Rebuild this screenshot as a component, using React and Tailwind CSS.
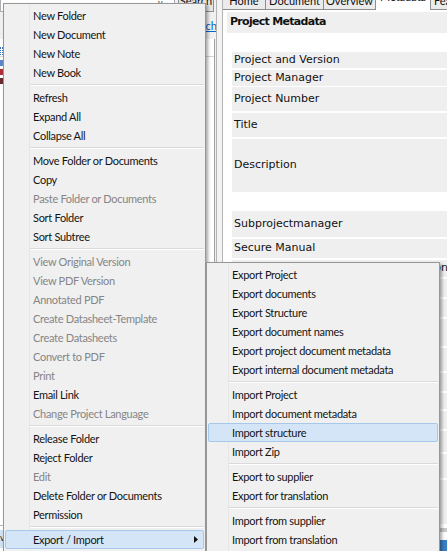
import React from "react";

const MAIN = [
  [{ t: "New Folder" }, { t: "New Document" }, { t: "New Note" }, { t: "New Book" }],
  [{ t: "Refresh" }, { t: "Expand All" }, { t: "Collapse All" }],
  [
    { t: "Move Folder or Documents" },
    { t: "Copy" },
    { t: "Paste Folder or Documents", off: true },
    { t: "Sort Folder" },
    { t: "Sort Subtree" },
  ],
  [
    { t: "View Original Version", off: true },
    { t: "View PDF Version", off: true },
    { t: "Annotated PDF", off: true },
    { t: "Create Datasheet-Template", off: true },
    { t: "Create Datasheets", off: true },
    { t: "Convert to PDF", off: true },
    { t: "Print", off: true },
    { t: "Email Link" },
    { t: "Change Project Language", off: true },
  ],
  [
    { t: "Release Folder" },
    { t: "Reject Folder" },
    { t: "Edit", off: true },
    { t: "Delete Folder or Documents" },
    { t: "Permission" },
  ],
  [{ t: "Export / Import", sub: true, hot: true }],
];

const SUB = [
  [
    { t: "Export Project" },
    { t: "Export documents" },
    { t: "Export Structure" },
    { t: "Export document names" },
    { t: "Export project document metadata" },
    { t: "Export internal document metadata" },
  ],
  [
    { t: "Import Project" },
    { t: "Import document metadata" },
    { t: "Import structure", hot: true },
    { t: "Import Zip" },
  ],
  [{ t: "Export to supplier" }, { t: "Export for translation" }],
  [{ t: "Import from supplier" }, { t: "Import from translation" }],
];

const TABS = [
  { t: "Home", w: "w-[43px]" },
  { t: "Document", w: "w-[58px]" },
  { t: "Overview", w: "w-[52px]" },
  { t: "Metadata", w: "w-[55px]", on: true },
  { t: "Features", w: "w-[40px]", last: true },
];

const ROWS = [
  { t: "Project and Version", h: "h-[16px]", mb: "mb-[2px]" },
  { t: "Project Manager", h: "h-[16px]", mb: "mb-[1px]" },
  { t: "Project Number", h: "h-[24px]", mb: "mb-[2px]" },
  { t: "Title", h: "h-[24px]", mb: "mb-[2px]" },
  { t: "Description", h: "h-[53px]", mb: "mb-[19px]" },
  { t: "Subprojectmanager", h: "h-[26px]", mb: "mb-[2px]" },
  { t: "Secure Manual", h: "h-[19px]", mb: "mb-[2px]" },
  { t: "Responsible for Project Documentation", h: "h-[17px]", mb: "mb-[2px]" },
  { t: "", h: "h-[18px]", mb: "mb-[2px]" },
  { t: "", h: "h-[18px]", mb: "mb-[2px]" },
  { t: "", h: "h-[27px]", mb: "mb-[2px]" },
  { t: "", h: "h-[23px]", mb: "mb-[2px]" },
  { t: "", h: "h-[18px]", mb: "mb-[2px]" },
  { t: "", h: "h-[16px]", mb: "mb-[2px]" },
  { t: "", h: "h-[18px]", mb: "mb-[2px]" },
  { t: "", h: "h-[21px]", mb: "mb-[2px]" },
  { t: "", h: "h-[24px]", mb: "mb-[2px]" },
  { t: "", h: "h-[44px]", mb: "mb-[2px]" },
];

function MenuItem({ item, pad }) {
  return (
    <div
      className={`relative mx-[1px] h-[19px] flex items-center border rounded-[2px] ${pad} ${
        item.hot ? "bg-[#d4e5f7] border-[#a6c8eb]" : "border-transparent"
      }`}
    >
      <span className={item.off ? "text-[#858585]" : "text-[#141414]"}>{item.t}</span>
      {item.sub && (
        <svg className="ml-auto mr-[5px]" width="4" height="7" viewBox="0 0 4 7">
          <path d="M0 0L4 3.5L0 7Z" fill="#111" />
        </svg>
      )}
    </div>
  );
}

function Menu({ groups, pos, gutter, sep, pad }) {
  return (
    <div
      className={`absolute ${pos} bg-[#f0f0f0] border border-[#979797] py-[2px] shadow-[2px_2px_3px_rgba(0,0,0,0.35)] font-['Lato',sans-serif] text-[11px] tracking-[-0.3px] leading-none`}
    >
      <div className={`absolute top-0 bottom-0 ${gutter} w-[2px] border-l border-[#e6e6e6] bg-transparent`} />
      {groups.map((g, gi) => (
        <React.Fragment key={gi}>
          {gi > 0 && (
            <div className={`h-[6px] flex flex-col justify-center ${sep} mr-[1px]`}>
              <div className="h-px bg-[#dadada]" />
              <div className="h-px bg-white" />
            </div>
          )}
          {g.map((item) => (
            <MenuItem key={item.t} item={item} pad={pad} />
          ))}
        </React.Fragment>
      ))}
    </div>
  );
}

export default function App() {
  return (
    <div className="relative w-[447px] h-[551px] overflow-hidden bg-white flex font-['DejaVu_Sans',sans-serif] text-[11px] text-[#111]">
      {/* left pane */}
      <div className="w-[216px] shrink-0 flex flex-col bg-[#f0f0f0]">
        <div className="h-[13px] flex items-start gap-[3px]">
          <div className="relative w-[175px] h-[12px] bg-white border border-t-0 border-[#abadb3]">
            <span className="absolute left-[157px] -top-[4px] font-['Lato',sans-serif] text-[9px] text-[#333]">v</span>
          </div>
          <div className="w-[36px] h-[12px] bg-[#e6e6e6] border border-t-0 border-[#8f8f8f] overflow-hidden flex justify-center">
            <span className="-mt-[5px] font-['Lato',sans-serif] text-[11px] leading-[12px]">Search</span>
          </div>
        </div>
        <div className="h-[26px] flex justify-end items-center -mr-[1px]">
          <span className="font-['Lato',sans-serif] text-[11px] text-[#0066cc] underline">Advanced Search</span>
        </div>
        <div className="flex-1 mr-[1px] bg-white border-r border-[#a0a0a0] flex flex-col">
          <div className="h-[18px] border-b border-[#d5d5d5] flex items-end">
            <span className="w-[3px] h-[8px] mb-[1px] border border-dotted border-[#3b6fb8]" />
          </div>
          <div className="flex flex-col gap-[3px] pt-[3px]">
            <span className="w-[3px] h-[6px] bg-[#5a86c8]" />
            <span className="w-[3px] h-[6px] bg-[#b0303a]" />
            <span className="w-[3px] h-[6px] bg-[#6b2b33]" />
          </div>
          <div className="mt-auto mb-[3px] border-t border-[#b8b8b8] pt-[4px]">
            <div className="h-[18px] bg-[#cfe2f5] flex items-center">
              <span className="text-[8px] text-[#222] leading-none">v</span>
            </div>
          </div>
        </div>
      </div>

      {/* splitter */}
      <div className="w-[7px] shrink-0 bg-[#f3f3f3] border-x border-[#b4b4b4]" />

      {/* right pane */}
      <div className="flex-1 min-w-0 flex flex-col bg-white">
        <div className="flex h-[10px] shrink-0 font-['Lato',sans-serif] text-[11px] leading-[12px]">
          {TABS.map((tab) =>
            tab.on ? (
              <div
                key={tab.t}
                className={`${tab.w} h-[10px] shrink-0 bg-white border-r border-[#8c8e94] overflow-hidden flex justify-center`}
              >
                <span className="-mt-[9px]">{tab.t}</span>
              </div>
            ) : (
              <div
                key={tab.t}
                className={`${tab.w} h-[10px] shrink-0 bg-[#ebebeb] border-r border-b border-[#8c8e94] overflow-hidden flex ${
                  tab.last ? "justify-start pl-[3px]" : "justify-center"
                }`}
              >
                <span className="-mt-[5px]">{tab.t}</span>
              </div>
            )
          )}
        </div>

        <div className="pl-[4px] pt-[2px]">
          <div className="h-[21px] bg-[#efefef] flex items-center pl-[3px]">
            <span className="font-bold tracking-[-0.7px] whitespace-nowrap">Project Metadata</span>
          </div>
          <div className="h-[19px]" />
          <div className="ml-[5px] flex flex-col">
            {ROWS.map((r, i) => (
              <div key={i} className={`${r.h} ${r.mb} bg-[#efefef] flex items-center pl-[2px] whitespace-nowrap`}>
                {r.t}
              </div>
            ))}
            <div className="h-[4px] bg-[#c8c8c8] mt-[2px]" />
            <div className="h-[8px]" />
            <div className="h-[12px] bg-[#3d7fc4]" />
          </div>
        </div>
      </div>

      {/* context menu */}
      <Menu groups={MAIN} pos="left-[3px] top-[3px] w-[203px]" gutter="left-[25px]" sep="ml-[25px]" pad="pl-[27px]" />
      {/* submenu */}
      <Menu groups={SUB} pos="left-[206px] top-[262px] w-[234px]" gutter="left-[21px]" sep="ml-[21px]" pad="pl-[23px]" />
    </div>
  );
}
